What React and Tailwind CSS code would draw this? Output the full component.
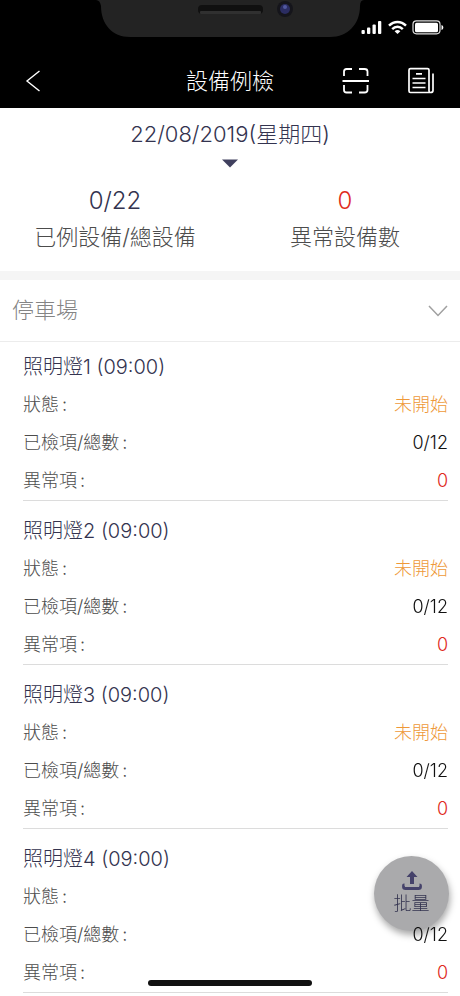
import React from "react";

const lamps = [
  { id: 1, name: "照明燈1 (09:00)", status: "未開始", checked: "0/12", abnormal: "0" },
  { id: 2, name: "照明燈2 (09:00)", status: "未開始", checked: "0/12", abnormal: "0" },
  { id: 3, name: "照明燈3 (09:00)", status: "未開始", checked: "0/12", abnormal: "0" },
  { id: 4, name: "照明燈4 (09:00)", status: "", checked: "0/12", abnormal: "0" },
];

function Notch() {
  return (
    <svg
      className="absolute left-1/2 top-0 -translate-x-1/2"
      width="268"
      height="37"
      viewBox="0 0 268 37"
      aria-hidden="true"
    >
      <path
        d="M0 0H268Q264 0 264 6C264 24 252 37 234 37H34C16 37 5 24 5 6Q4 0 0 0Z"
        fill="#232323"
      />
      <rect x="102" y="5" width="65" height="9" rx="4" fill="#101010" />
      <rect x="104" y="11" width="61" height="3" rx="1" fill="#303030" />
      <circle cx="189" cy="9" r="8" fill="#15151b" />
      <circle cx="189" cy="9" r="5" fill="#2b2d62" />
      <circle cx="189" cy="7" r="2" fill="#5158a0" />
    </svg>
  );
}

function StatusIcons() {
  return (
    <svg width="84" height="16" viewBox="0 0 84 16" fill="none" aria-hidden="true">
      <g fill="#fff">
        <rect x="1.500" y="11" width="3.300" height="4" rx="1" />
        <rect x="7" y="8.500" width="3.300" height="6.500" rx="1" />
        <rect x="12.500" y="5.500" width="3.300" height="9.500" rx="1" />
        <rect x="18" y="2" width="3.300" height="13" rx="1" />
        <path d="M37.500 15L34.600 12.200Q37.500 10 40.400 12.200Z" />
        <rect x="55" y="3.800" width="23" height="9.500" rx="1.500" />
        <path d="M81.500 6v5c1.400-.6 1.800-1.300 1.800-2.500S82.900 6.600 81.500 6Z" />
      </g>
      <path
        d="M29 6.700C34 1.700 41 1.700 46 6.700M32.200 10.200C35.300 7 39.700 7 42.800 10.200"
        stroke="#fff"
        strokeWidth="2.400"
      />
      <rect x="53" y="1.800" width="27" height="13" rx="3.500" stroke="#ddd" strokeWidth="1.200" />
    </svg>
  );
}

function Row({ label, value, color }) {
  return (
    <div className="flex h-[38px] items-center justify-between text-lg">
      <dt className="flex gap-[3px] text-[#4c4c4c]">
        <span>{label}</span>
        <span>:</span>
      </dt>
      <dd className={color}>{value}</dd>
    </div>
  );
}

export default function App() {
  return (
    <div className="min-h-screen overflow-hidden bg-white font-['Inter','Noto_Sans_CJK_TC',sans-serif] font-light">
      <header className="relative bg-black text-white">
        <Notch />
        <div className="flex h-[54px] items-center justify-end pr-4">
          <StatusIcons />
        </div>
        <div className="grid h-[54px] grid-cols-3 items-center">
          <button type="button" aria-label="返回" className="ml-[22px] w-6">
            <svg width="24" height="24" viewBox="0 0 24 24" fill="none" stroke="#fff" strokeWidth="1.4">
              <path d="M17.500 2L5 12L17.500 22" />
            </svg>
          </button>
          <h1 className="text-center text-[22px]">設備例檢</h1>
          <div className="flex items-center justify-end gap-[37px] pr-[25px]">
            <button type="button" aria-label="掃描">
              <svg width="28" height="28" viewBox="0 0 28 28" fill="none" stroke="#fff" strokeWidth="1.800">
                <path d="M2 9V4.500Q2 2 4.500 2H10M17 2H22.500Q25.500 2 25.500 4.500V9M2 18V23Q2 25.500 4.500 25.500H10M17 25.500H22.500Q25.500 25.500 25.500 23V18M0.500 14H27" />
              </svg>
            </button>
            <button type="button" aria-label="記錄">
              <svg width="28" height="28" viewBox="0 0 28 28" fill="none" stroke="#fff" strokeWidth="1.700">
                <path d="M23 25.500H3.500Q2 25.500 2 24V3Q2 1.600 3.500 1.600H20.500Q22 1.600 22 3V24Q22 25.500 23.500 25.500Q26 25.500 26 23.500V6.500M9 6.800H15M5.500 11.500H18.500M5.500 16H18.500M5.500 20.500H18.500" />
              </svg>
            </button>
          </div>
        </div>
      </header>

      <section className="border-b-9 border-[#f5f5f5] pb-[15px]">
        <button type="button" className="flex w-full flex-col items-center pt-[10px] text-[#33334f]">
          <span className="text-[22px] leading-8">22/08/2019(星期四)</span>
          <svg className="mt-[9px]" width="18" height="9" viewBox="0 0 18 9" aria-hidden="true">
            <path d="M1 0.500H17L9 8.500Z" fill="#40405e" />
          </svg>
        </button>
        <div className="grid grid-cols-2 pt-[15px] text-center">
          <div>
            <p className="text-2xl leading-9 text-[#33334f]">0/22</p>
            <p className="text-[22px] leading-[37px] text-[#4c4c4c]">已例設備/總設備</p>
          </div>
          <div>
            <p className="text-2xl leading-9 text-[#e02a1c]">0</p>
            <p className="text-[22px] leading-[37px] text-[#4c4c4c]">異常設備數</p>
          </div>
        </div>
      </section>

      <button
        type="button"
        className="flex h-[62px] w-full items-center justify-between border-b border-[#ececec] px-3 text-[22px] text-[#848484]"
      >
        <span>停車場</span>
        <svg width="20" height="12" viewBox="0 0 20 12" fill="none" stroke="#a0a0a0" strokeWidth="1.500" aria-hidden="true">
          <path d="M1 1L10 10.500L19 1" />
        </svg>
      </button>

      <ul className="-mt-[5px] pl-[23px] pr-3">
        {lamps.map((lamp) => (
          <li key={lamp.id} className="border-b border-[#dcdcdc] pt-[11px]">
            <h2 className="flex h-[38px] items-center text-[20px] text-[#33334f]">{lamp.name}</h2>
            <dl>
              <Row label="狀態" value={lamp.status} color="text-[#ee9838]" />
              <Row label="已檢項/總數" value={lamp.checked} color="relative z-20 text-[#111]" />
              <Row label="異常項" value={lamp.abnormal} color="text-[#e02a1c]" />
            </dl>
          </li>
        ))}
      </ul>

      <button
        type="button"
        className="fixed bottom-[65px] right-[11px] z-10 flex size-[75px] flex-col items-center rounded-full bg-[#aaaaac] pt-[15px] text-[#33334f] shadow-[1px_4px_7px_rgba(0,0,0,0.35)]"
      >
        <svg width="20" height="20" viewBox="0 0 20 20" aria-hidden="true">
          <path d="M10 0L15.500 6H12V13H8V6H4.500Z" fill="#45426a" />
          <path d="M2.500 14H2Q1.500 14 1.500 14.500V16Q1.500 17.500 3.500 17.500H16.500Q18.500 17.500 18.500 16V14.500Q18.500 14 17.500 14" fill="none" stroke="#45426a" strokeWidth="2.800" />
        </svg>
        <span className="text-lg leading-[26px]">批量</span>
      </button>
      <div className="fixed bottom-[10px] left-1/2 z-10 h-[6px] w-[164px] -translate-x-1/2 rounded-full bg-[#111]" />
    </div>
  );
}
